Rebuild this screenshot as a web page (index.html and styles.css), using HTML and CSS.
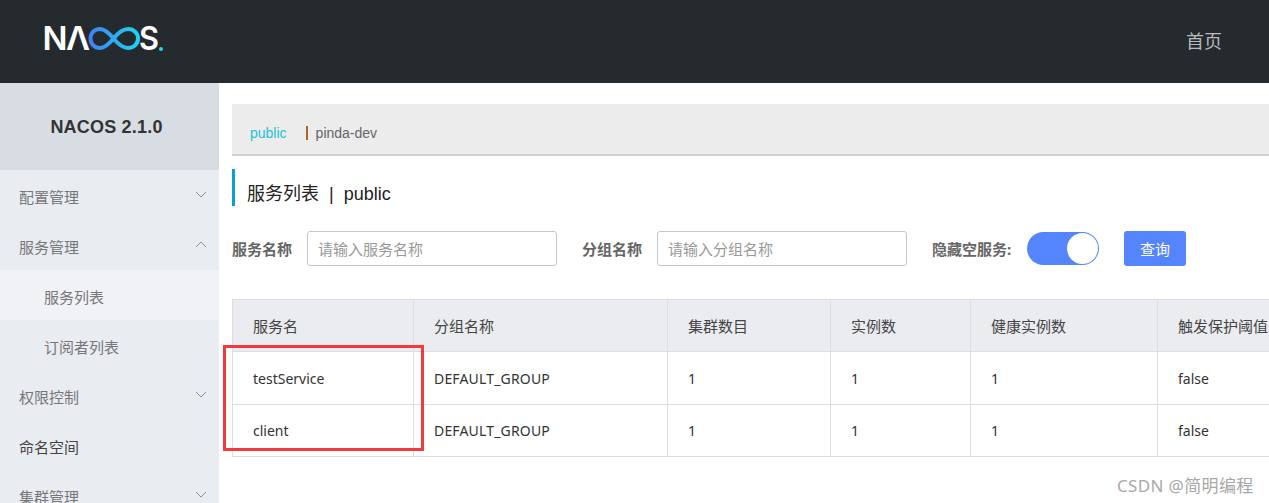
FILE: index.html
```html
<!DOCTYPE html>
<html lang="zh-CN">
<head>
<meta charset="utf-8">
<title>Nacos</title>
<link rel="stylesheet" href="styles.css">
</head>
<body>
<div class="page">
  <header class="topbar">
    <svg class="logo" width="128" height="40" viewBox="-3 0 128 40" aria-label="NACOS">
      <defs>
        <linearGradient id="inf" gradientUnits="userSpaceOnUse" x1="44" x2="95" y1="0" y2="0">
          <stop offset="0" stop-color="#3f7ff5"/>
          <stop offset="1" stop-color="#1ed6f2"/>
        </linearGradient>
      </defs>
      <text class="logo-text" x="-2.500" y="30" textLength="25" lengthAdjust="spacingAndGlyphs">N</text>
      <text class="logo-text" x="21" y="30" textLength="24" lengthAdjust="spacingAndGlyphs">Λ</text>
      <path d="M68.500 18.500C64 13 60 9 55 9C49 9 45.500 13.500 45.500 18.500C45.500 23.500 49 28 55 28C60 28 64 24 68.500 18.500C73 13 77 9 83 9C89 9 93 13.500 93 18.500C93 23.500 89 28 83 28C77 28 73 24 68.500 18.500Z" fill="none" stroke="url(#inf)" stroke-width="4"/>
      <text class="logo-text" x="94" y="30" textLength="20" lengthAdjust="spacingAndGlyphs">S</text>
      <circle cx="116" cy="29" r="2" fill="#1ed6f2"/>
    </svg>
    <a class="top-link">首页</a>
  </header>
  <div class="body">
    <aside class="sidebar">
      <div class="brand">NACOS 2.1.0</div>
      <nav class="menu">
        <div class="menu-item">配置管理<svg class="chev" viewBox="0 0 12 7"><path d="M1 1l5 5 5-5"/></svg></div>
        <div class="menu-item">服务管理<svg class="chev" viewBox="0 0 12 7"><path d="M1 6l5-5 5 5"/></svg></div>
        <div class="menu-item sub active">服务列表</div>
        <div class="menu-item sub">订阅者列表</div>
        <div class="menu-item">权限控制<svg class="chev" viewBox="0 0 12 7"><path d="M1 1l5 5 5-5"/></svg></div>
        <div class="menu-item dark">命名空间</div>
        <div class="menu-item">集群管理<svg class="chev" viewBox="0 0 12 7"><path d="M1 1l5 5 5-5"/></svg></div>
      </nav>
    </aside>
    <main class="main">
      <div class="ns-bar">
        <span class="ns-active">public</span>
        <span class="ns-sep"></span>
        <span class="ns-item">pinda-dev</span>
      </div>
      <h1 class="title">服务列表&nbsp;&nbsp;|&nbsp;&nbsp;public</h1>
      <form class="filters">
        <label class="flabel">服务名称</label>
        <input class="finput" placeholder="请输入服务名称">
        <label class="flabel second">分组名称</label>
        <input class="finput" placeholder="请输入分组名称">
        <label class="flabel third">隐藏空服务:</label>
        <span class="switch"><span class="knob"></span></span>
        <button class="query" type="button">查询</button>
      </form>
      <table class="grid">
        <colgroup>
          <col class="c1"><col class="c2"><col class="c3"><col class="c4"><col class="c5"><col class="c6">
        </colgroup>
        <thead>
          <tr><th>服务名</th><th>分组名称</th><th>集群数目</th><th>实例数</th><th>健康实例数</th><th>触发保护阈值</th></tr>
        </thead>
        <tbody>
          <tr><td>testService</td><td class="group">DEFAULT_GROUP</td><td>1</td><td>1</td><td>1</td><td>false</td></tr>
          <tr><td>client</td><td class="group">DEFAULT_GROUP</td><td>1</td><td>1</td><td>1</td><td>false</td></tr>
        </tbody>
      </table>
    </main>
  </div>
  <div class="redbox"></div>
  <div class="watermark">CSDN @简明编程</div>
</div>
</body>
</html>
```
FILE: styles.css
```css
* { box-sizing: border-box; }
html, body { margin: 0; padding: 0; }
body {
  font-family: "Noto Sans", "Noto Sans CJK SC", sans-serif;
  color: #333;
  background: #fff;
}
.page {
  position: relative;
  width: 1269px;
  height: 503px;
  overflow: hidden;
}
.topbar {
  height: 83px;
  background: #252a2f;
  display: flex;
  align-items: center;
  justify-content: space-between;
  padding: 0 47px 3px 45px;
}
.logo { display: block; margin-left: -3px; }
.logo-text {
  font-family: "Inter", sans-serif;
  font-weight: 600;
  font-size: 32px;
  fill: #fff;
}
.top-link {
  font-size: 18px;
  line-height: 24px;
  color: #b9bbbd;
  margin-top: 1px;
}
.body { display: flex; height: 420px; }
.sidebar {
  width: 219px;
  flex: none;
  background: #e9ecf1;
}
.brand {
  height: 87px;
  background: #d8dde4;
  display: flex;
  align-items: center;
  justify-content: center;
  font-family: "Liberation Sans", sans-serif;
  font-weight: 700;
  font-size: 18px;
  letter-spacing: 0.2px;
  color: #333;
  padding: 2px 6px 0 0;
}
.menu-item {
  height: 50px;
  display: flex;
  align-items: center;
  justify-content: space-between;
  padding: 2px 12px 0 19px;
  font-size: 15px;
  color: #777;
}
.menu-item.sub { padding-left: 44px; }
.menu-item.active { background: #f0f2f6; }
.menu-item.dark { color: #444; }
.chev {
  width: 12px;
  height: 7px;
  fill: none;
  stroke: #8a8f96;
  stroke-width: 1;
  margin-top: -4px;
}
.main {
  flex: 1;
  min-width: 0;
  padding: 21px 0 0 13px;
}
.ns-bar {
  height: 52px;
  width: 1100px;
  background: #ececec;
  border-bottom: 2px solid #cfcfcf;
  display: flex;
  align-items: center;
  padding: 7px 0 0 18px;
  font-family: "Liberation Sans", "Noto Sans CJK SC", sans-serif;
  font-size: 14px;
  line-height: 20px;
}
.ns-active { color: #1bc2dd; }
.ns-sep {
  width: 2px;
  height: 14px;
  background: #a5682a;
  margin: 0 8px 0 19px;
}
.ns-item { color: #666; }
.title {
  margin: 13px 0 0;
  height: 37px;
  border-left: 3px solid #0b9ed4;
  padding: 12px 0 0 12px;
  font-family: "Liberation Sans", "Noto Sans CJK SC", sans-serif;
  font-weight: 400;
  font-size: 18px;
  line-height: 26px;
  color: #222;
  display: flex;
  align-items: center;
}
.filters {
  display: flex;
  align-items: center;
  height: 35px;
  margin-top: 25px;
}
.flabel {
  font-size: 15px;
  font-weight: 700;
  color: #666;
  width: 75px;
  flex: none;
  white-space: nowrap;
}
.flabel.second { margin-left: 25px; }
.flabel.third { margin-left: 25px; width: 95px; }
.finput {
  width: 250px;
  height: 35px;
  flex: none;
  border: 1px solid #c4c6cf;
  border-radius: 3px;
  padding: 0 10px;
  font-family: inherit;
  font-size: 15px;
  background: #fff;
  outline: none;
}
.finput::placeholder { color: #999; opacity: 1; }
.switch {
  width: 72px;
  height: 33px;
  border-radius: 17px;
  background: #5584ff;
  flex: none;
  display: flex;
  align-items: center;
  justify-content: flex-end;
  padding-right: 1px;
}
.knob {
  width: 31px;
  height: 31px;
  border-radius: 50%;
  background: #fff;
}
.query {
  width: 62px;
  height: 35px;
  margin-left: 25px;
  flex: none;
  background: #5584ff;
  color: #fff;
  border: 0;
  border-radius: 3px;
  font-family: inherit;
  font-size: 15px;
}
.grid {
  margin-top: 33px;
  border-collapse: collapse;
  table-layout: fixed;
  width: 1125px;
  font-size: 14px;
}
.c1 { width: 181px; }
.c2 { width: 254px; }
.c3 { width: 163px; }
.c4 { width: 140px; }
.c5 { width: 187px; }
.c6 { width: 200px; }
.grid th, .grid td {
  border: 1px solid #dcdee3;
  text-align: left;
  padding: 0 0 0 20px;
  font-weight: 400;
  white-space: nowrap;
}
.grid th { height: 52px; background: #ebecf0; color: #444; font-size: 15px; }
.grid td { height: 53px; color: #333; }
.grid tr:last-child td { height: 52px; }
.grid .group { letter-spacing: 0.17px; }
.redbox {
  position: absolute;
  left: 223px;
  top: 345px;
  width: 201px;
  height: 106px;
  border: 3px solid #f03a3d;
}
.watermark {
  position: absolute;
  left: 1117px;
  top: 474px;
  font-size: 17px;
  letter-spacing: 0.35px;
  line-height: 24px;
  color: #a8a8a8;
  white-space: nowrap;
}
```
